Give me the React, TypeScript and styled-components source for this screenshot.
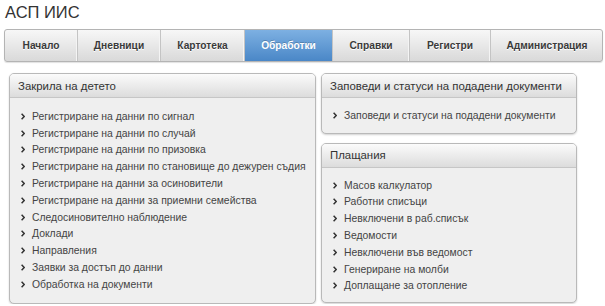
import React from "react";
import styled, { createGlobalStyle } from "styled-components";

const Global = createGlobalStyle`
  html, body { margin: 0; padding: 0; background: #ffffff; }
  body { font-family: "Liberation Sans", Arial, sans-serif; color: #333; }
`;

const Page = styled.div`
  padding: 1px 2px 0 4px;
  display: flex;
  flex-direction: column;
`;

const Title = styled.h1`
  margin: 0 0 6px 1px;
  font-size: 16.5px;
  line-height: 22px;
  font-weight: normal;
  color: #333;
`;

const Nav = styled.nav`
  display: flex;
  height: 31px;
  border: 1px solid #b4b4b4;
  border-radius: 3px;
  background: linear-gradient(#f7f7f7, #d9d9d9);
  box-shadow: 0 1px 1px rgba(0, 0, 0, 0.12);
  overflow: hidden;
`;

const Tab = styled.div<{ $w: number; $active?: boolean; $last?: boolean }>`
  flex: 0 0 ${(p) => p.$w}px;
  display: flex;
  align-items: center;
  justify-content: center;
  font-size: 10.2px;
  font-weight: bold;
  color: ${(p) => (p.$active ? "#ffffff" : "#3a3a3a")};
  background: ${(p) =>
    p.$active ? "linear-gradient(#7db0e2, #4a87c7)" : "transparent"};
  border-right: ${(p) => (p.$last ? "none" : "1px solid #c4c4c4")};
  box-shadow: ${(p) => (p.$active ? "none" : "inset -1px 0 0 #f4f4f4")};
  text-shadow: ${(p) => (p.$active ? "0 -1px 0 rgba(0,0,0,0.2)" : "0 1px 0 #fff")};
  box-sizing: border-box;
`;

const Content = styled.div`
  display: flex;
  gap: 5px;
  margin-top: 11px;
  padding-left: 5px;
  align-items: flex-start;
`;

const Column = styled.div<{ $w: number }>`
  width: ${(p) => p.$w}px;
  display: flex;
  flex-direction: column;
  gap: 9px;
`;

const Panel = styled.section`
  border: 1px solid #b9b9b9;
  border-radius: 5px;
  background: #efefef;
  box-shadow: 0 1px 2px rgba(0, 0, 0, 0.18);
  overflow: hidden;
`;

const PanelHeader = styled.div`
  height: 24px;
  box-sizing: border-box;
  padding-left: 8px;
  display: flex;
  align-items: center;
  font-size: 11.4px;
  color: #333;
  white-space: nowrap;
  background: linear-gradient(#fbfbfb, #dcdcdc);
  border-bottom: 1px solid #c6c6c6;
`;

const List = styled.ul<{ $pt: number; $pb: number }>`
  list-style: none;
  margin: 0;
  padding: ${(p) => p.$pt}px 0 ${(p) => p.$pb}px 11px;
`;

const Item = styled.li`
  display: flex;
  align-items: center;
  height: 16.8px;
  font-size: 10.4px;
  color: #444;
  white-space: nowrap;
`;

const Chevron = styled.svg`
  width: 4px;
  height: 7px;
  margin-right: 7px;
  flex: 0 0 auto;
`;

const Arrow = () => (
  <Chevron viewBox="0 0 4 7">
    <polyline points="0.6,0.8 3.2,3.5 0.6,6.2" fill="none" stroke="#333" strokeWidth="1.5" />
  </Chevron>
);

const tabs = [
  { label: "Начало", w: 73 },
  { label: "Дневници", w: 83 },
  { label: "Картотека", w: 84 },
  { label: "Обработки", w: 88, active: true },
  { label: "Справки", w: 77 },
  { label: "Регистри", w: 81 },
  { label: "Администрация", w: 112 },
];

const childItems = [
  "Регистриране на данни по сигнал",
  "Регистриране на данни по случай",
  "Регистриране на данни по призовка",
  "Регистриране на данни по становище до дежурен съдия",
  "Регистриране на данни за осиновители",
  "Регистриране на данни за приемни семейства",
  "Следосиновително наблюдение",
  "Доклади",
  "Направления",
  "Заявки за достъп до данни",
  "Обработка на документи",
];

const payItems = [
  "Масов калкулатор",
  "Работни списъци",
  "Невключени в раб.списък",
  "Ведомости",
  "Невключени във ведомост",
  "Генериране на молби",
  "Доплащане за отопление",
];

export default function App() {
  return (
    <>
      <Global />
      <Page>
        <Title>АСП ИИС</Title>
        <Nav>
          {tabs.map((t, i) => (
            <Tab key={t.label} $w={t.w} $active={t.active} $last={i === tabs.length - 1}>
              {t.label}
            </Tab>
          ))}
        </Nav>
        <Content>
          <Column $w={307}>
            <Panel>
              <PanelHeader>Закрила на детето</PanelHeader>
              <List $pt={10} $pb={10}>
                {childItems.map((s) => (
                  <Item key={s}>
                    <Arrow />
                    {s}
                  </Item>
                ))}
              </List>
            </Panel>
          </Column>
          <Column $w={256}>
            <Panel>
              <PanelHeader>Заповеди и статуси на подадени документи</PanelHeader>
              <List $pt={9} $pb={9}>
                <Item>
                  <Arrow />
                  Заповеди и статуси на подадени документи
                </Item>
              </List>
            </Panel>
            <Panel>
              <PanelHeader>Плащания</PanelHeader>
              <List $pt={9} $pb={8}>
                {payItems.map((s) => (
                  <Item key={s}>
                    <Arrow />
                    {s}
                  </Item>
                ))}
              </List>
            </Panel>
          </Column>
        </Content>
      </Page>
    </>
  );
}
